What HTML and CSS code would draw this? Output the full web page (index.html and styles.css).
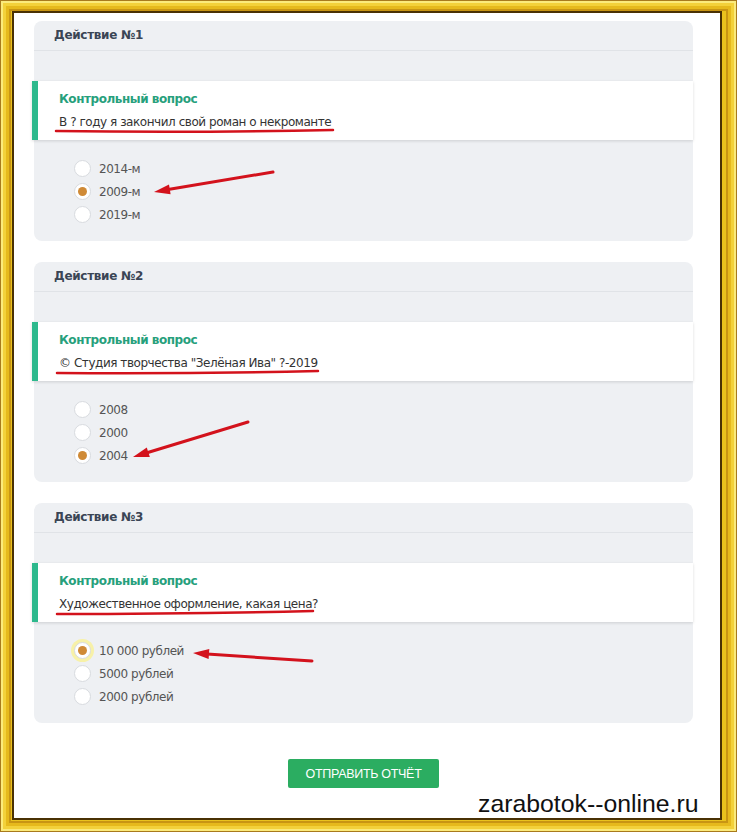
FILE: index.html
```html
<!DOCTYPE html>
<html lang="ru">
<head>
    <meta charset="UTF-8">
    <meta name="viewport" content="width=device-width, initial-scale=1.0">
    <title>Отчёт о выполнении</title>
    <link rel="stylesheet" href="styles.css">
</head>
<body>
    <div class="frame">
        <div class="sheet">
            <div class="card">
                <div class="card-head">Действие №1</div>
                <div class="card-gap"></div>
                <div class="question">
                    <div class="question-title">Контрольный вопрос</div>
                    <div class="question-text">В ? году я закончил свой роман о некроманте</div>
                </div>
                <div class="options">
                    <label class="option"><input type="radio" class="radio" name="q1"> 2014-м</label>
                    <label class="option"><input type="radio" class="radio" name="q1" checked> 2009-м</label>
                    <label class="option"><input type="radio" class="radio" name="q1"> 2019-м</label>
                </div>
            </div>

            <div class="card">
                <div class="card-head">Действие №2</div>
                <div class="card-gap"></div>
                <div class="question">
                    <div class="question-title">Контрольный вопрос</div>
                    <div class="question-text">© Студия творчества "Зелёная Ива" ?-2019</div>
                </div>
                <div class="options">
                    <label class="option"><input type="radio" class="radio" name="q2"> 2008</label>
                    <label class="option"><input type="radio" class="radio" name="q2"> 2000</label>
                    <label class="option"><input type="radio" class="radio" name="q2" checked> 2004</label>
                </div>
            </div>

            <div class="card">
                <div class="card-head">Действие №3</div>
                <div class="card-gap"></div>
                <div class="question">
                    <div class="question-title">Контрольный вопрос</div>
                    <div class="question-text">Художественное оформление, какая цена?</div>
                </div>
                <div class="options">
                    <label class="option"><input type="radio" class="radio focused" name="q3" checked> 10 000 рублей</label>
                    <label class="option"><input type="radio" class="radio" name="q3"> 5000 рублей</label>
                    <label class="option"><input type="radio" class="radio" name="q3"> 2000 рублей</label>
                </div>
            </div>

            <div class="actions">
                <button class="send-btn">Отправить отчёт</button>
            </div>
        </div>

        <!-- пометки поверх скриншота -->
        <svg class="marks" width="737" height="832" viewBox="0 0 737 832">
            <g fill="none" stroke="#d3121c" stroke-width="2.5" stroke-linecap="round">
                <path d="M56 131 Q 190 133 333 130"/>
                <path d="M57 373 Q 190 374 318 371"/>
                <path d="M57 614 Q 190 614 313 611"/>
            </g>
            <g stroke="#d3121c" stroke-width="3" stroke-linecap="round" fill="#d3121c">
                <line x1="273" y1="172" x2="168" y2="189.6"/>
                <polygon stroke="none" points="154,192 170.6,194.3 169,184.4"/>
                <line x1="248" y1="422" x2="147" y2="452.7"/>
                <polygon stroke="none" points="133,457 149.8,457.1 146.8,447.5"/>
                <line x1="312" y1="661" x2="207" y2="654"/>
                <polygon stroke="none" points="193,653 208.6,659.1 209.3,649.1"/>
            </g>
        </svg>
        <div class="watermark">zarabotok--online.ru</div>
    </div>
</body>
</html>
```

FILE: styles.css
```css
body {
    margin: 0;
    font-family: "DejaVu Sans", Verdana, sans-serif;
    font-size: 12px;
    letter-spacing: -0.45px;
    color: #333;
}
.frame {
    position: relative;
    width: 737px;
    height: 832px;
    box-sizing: border-box;
    padding: 11px 15px 12px 12px;
    background: #eac21d;
    box-shadow:
        inset 0 0 0 1px #a87a1c,
        inset 0 0 0 3px #fbea7c,
        inset 0 0 0 6px #f3d13a,
        inset 0 0 0 9px #e6b91c,
        inset 0 0 0 11px #c89513;
}
.sheet {
    height: 100%;
    box-sizing: border-box;
    background: #fff;
    border: 2px solid #4a3104;
    padding: 8px 27px 0 20px;
}
.card {
    background: #eef0f3;
    border-radius: 8px;
    margin-bottom: 21px;
}
.card-head {
    height: 29px;
    line-height: 29px;
    padding: 0 20px;
    font-weight: bold;
    letter-spacing: -0.3px;
    color: #3a4555;
    border-bottom: 1px solid #e0e3e7;
}
.card-gap {
    height: 30px;
}
.question {
    margin-left: -2px;
    background: #fff;
    border-left: 6px solid #2db98d;
    padding: 9px 20px 9px 21px;
    box-shadow: 0 1px 3px rgba(0, 0, 0, 0.14);
}
.question-title {
    line-height: 18px;
    font-weight: bold;
    color: #27a07c;
}
.question-text {
    margin-top: 5px;
    line-height: 18px;
    color: #333;
}
.options {
    padding: 17px 0 15px 40px;
}
.option {
    display: flex;
    align-items: center;
    gap: 8px;
    height: 23px;
    color: #555;
}
.radio {
    appearance: none;
    margin: 0;
    width: 17px;
    height: 17px;
    border-radius: 50%;
    background: #fff;
    border: 1px solid #d8dbdf;
    box-sizing: border-box;
    display: flex;
    align-items: center;
    justify-content: center;
}
.radio:checked::after {
    content: "";
    width: 9px;
    height: 9px;
    border-radius: 50%;
    background: #cf8a36;
}
.radio.focused {
    box-shadow: 0 0 0 3px #f7f1a8;
}
.actions {
    text-align: center;
    padding-top: 15px;
}
.send-btn {
    width: 151px;
    height: 29px;
    border: none;
    border-radius: 2px;
    background: #2bad61;
    color: #fff;
    font-family: "Liberation Sans", Arial, sans-serif;
    font-size: 12.5px;
    letter-spacing: -0.3px;
    text-transform: uppercase;
}
.marks {
    position: absolute;
    left: 0;
    top: 0;
    pointer-events: none;
}
.watermark {
    position: absolute;
    left: 478px;
    top: 792px;
    font-family: "Liberation Sans", Arial, sans-serif;
    font-size: 24.8px;
    letter-spacing: 0;
    line-height: 1;
    color: #111;
}
```
